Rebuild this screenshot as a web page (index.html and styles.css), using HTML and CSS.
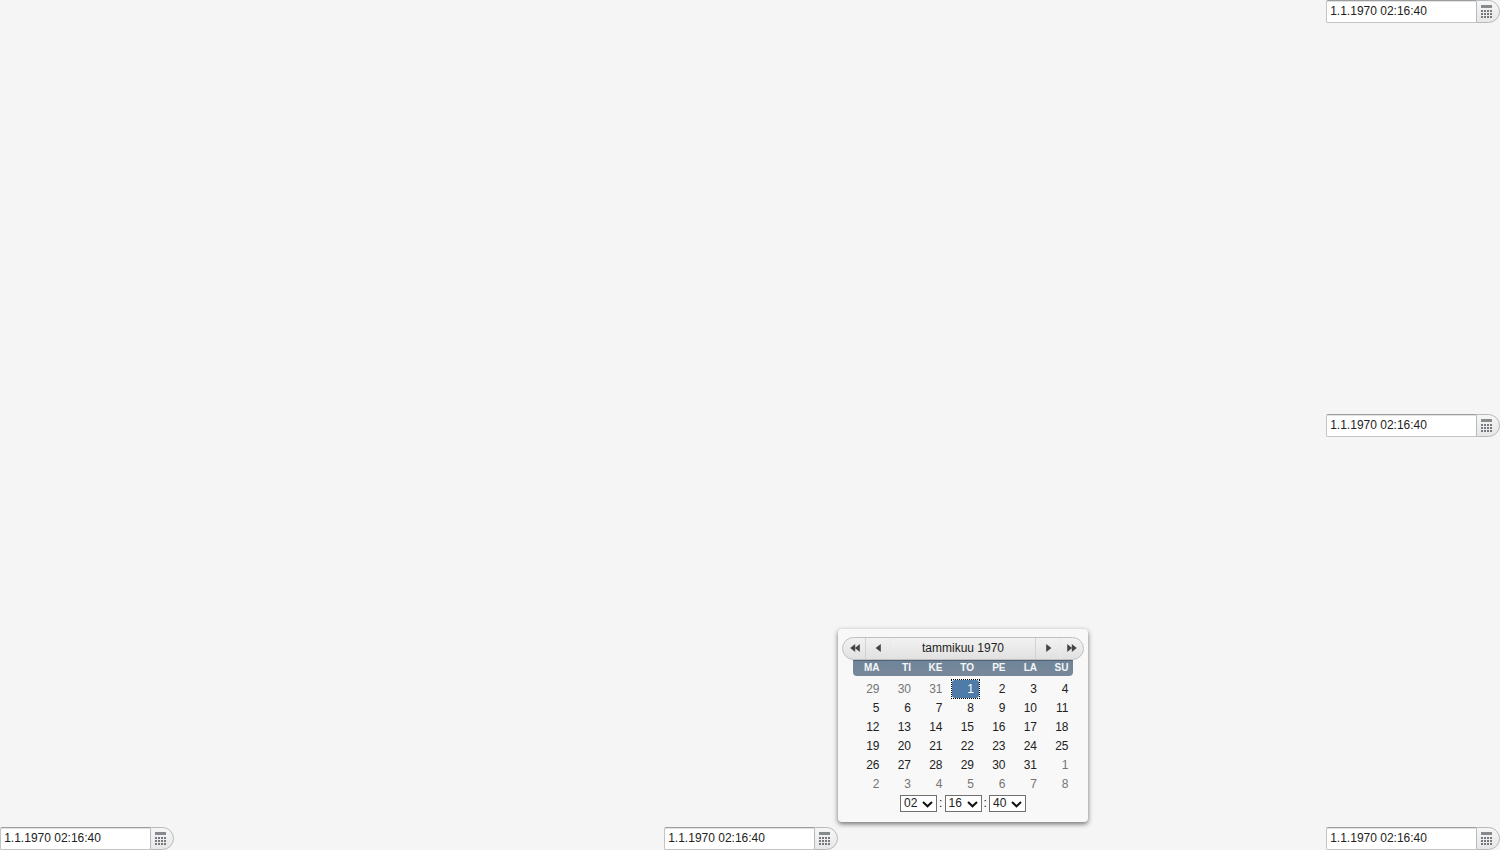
FILE: index.html
```html
<!DOCTYPE html>
<html lang="fi">
<head>
<meta charset="utf-8">
<title>Date fields</title>
<link rel="stylesheet" href="styles.css">
</head>
<body>
<svg class="defs" width="0" height="0">
  <symbol id="cal" viewBox="0 0 11 13">
    <path fill="#858a8f" d="M0 0h11v3H0z"/>
    <path fill="#75797d" d="M0 5h2v2H0zM3 5h2v2H3zM6 5h2v2H6zM9 5h2v2H9zM0 8h2v2H0zM3 8h2v2H3zM6 8h2v2H6zM9 8h2v2H9zM0 11h2v2H0zM3 11h2v2H3zM6 11h2v2H6zM9 11h2v2H9z"/>
  </symbol>
  <symbol id="one" viewBox="0 0 10 8"><path d="M7.8 0v8L2.6 4z"/></symbol>
  <symbol id="two" viewBox="0 0 10 8"><path d="M5.2 0v8L.2 4zM9.8 0v8L5 4z"/></symbol>
  <symbol id="chev" viewBox="0 0 11 7"><path fill="none" stroke="#111" stroke-width="2" d="M1 1l4.5 4.3L10 1"/></symbol>
</svg>
<main class="page">
  <div class="row end">
    <div class="field"><div class="input">1.1.1970 02:16:40</div><div class="button"><svg><use href="#cal"/></svg></div></div>
  </div>
  <div class="row end">
    <div class="field"><div class="input">1.1.1970 02:16:40</div><div class="button"><svg><use href="#cal"/></svg></div></div>
  </div>
  <div class="row bottom">
    <div class="field"><div class="input">1.1.1970 02:16:40</div><div class="button"><svg><use href="#cal"/></svg></div></div>
    <div class="field"><div class="input">1.1.1970 02:16:40</div><div class="button"><svg><use href="#cal"/></svg></div></div>
    <div class="field"><div class="input">1.1.1970 02:16:40</div><div class="button"><svg><use href="#cal"/></svg></div></div>
  </div>
</main>
<section class="popup">
  <div class="nav">
    <span class="step"><svg><use href="#two"/></svg></span>
    <span class="step"><svg><use href="#one"/></svg></span>
    <span class="month">tammikuu 1970</span>
    <span class="step flip"><svg><use href="#one"/></svg></span>
    <span class="step flip last"><svg><use href="#two"/></svg></span>
  </div>
  <div class="week"><span>MA</span><span>TI</span><span>KE</span><span>TO</span><span>PE</span><span>LA</span><span>SU</span></div>
  <div class="days">
    <span class="off">29</span><span class="off">30</span><span class="off">31</span><span class="selected">1</span><span>2</span><span>3</span><span>4</span>
    <span>5</span><span>6</span><span>7</span><span>8</span><span>9</span><span>10</span><span>11</span>
    <span>12</span><span>13</span><span>14</span><span>15</span><span>16</span><span>17</span><span>18</span>
    <span>19</span><span>20</span><span>21</span><span>22</span><span>23</span><span>24</span><span>25</span>
    <span>26</span><span>27</span><span>28</span><span>29</span><span>30</span><span>31</span><span class="off">1</span>
    <span class="off">2</span><span class="off">3</span><span class="off">4</span><span class="off">5</span><span class="off">6</span><span class="off">7</span><span class="off">8</span>
  </div>
  <div class="time">
    <span class="select">02<svg><use href="#chev"/></svg></span><span class="colon">:</span><span class="select">16<svg><use href="#chev"/></svg></span><span class="colon">:</span><span class="select">40<svg><use href="#chev"/></svg></span>
  </div>
</section>
</body>
</html>
```
FILE: styles.css
```css
* { box-sizing: border-box; }
body {
  margin: 0;
  background: #f5f5f5;
  color: #222;
  font: 12px/18px "Liberation Sans", Arial, sans-serif;
  overflow: hidden;
}
.defs { position: absolute; }
.page { height: 850px; display: flex; flex-direction: column; justify-content: space-between; }
.row { display: flex; }
.end { justify-content: flex-end; }
.bottom { display: grid; grid-template-columns: 664px 662px 174px; }
.field { display: flex; width: 174px; height: 23px; }
.input {
  width: 150px;
  padding: 1px 3.2px;
  background: #fff;
  border: 1px solid #c4c4c4;
  border-top-color: #9c9d9d;
  border-right: 0;
  border-radius: 2px 0 0 2px;
  box-shadow: inset 0 1px 0 #e2e2e2;
}
.button {
  width: 24px;
  padding: 4px 0 0 4px;
  border: 1px solid #b8b9ba;
  border-radius: 0 12px 12px 0;
  background: linear-gradient(#f6f6f6, #e7e7e7);
}
.button svg { display: block; width: 11px; height: 13px; }
.popup {
  position: absolute;
  left: 838px;
  top: 629px;
  width: 250px;
  height: 193px;
  padding: 8px 4px 0;
  background: #f8f8f8;
  border-radius: 4px;
  box-shadow: 0 2px 5px rgba(0, 0, 0, .55);
}
.nav {
  display: flex;
  width: 242px;
  height: 23px;
  border: 1px solid #bfc0c1;
  border-radius: 12px;
  background: linear-gradient(#f2f2f2, #e1e1e1);
}
.step {
  width: 23px;
  display: flex;
  align-items: center;
  justify-content: center;
  border-right: 1px solid #d2d2d2;
}
.step svg { width: 10px; height: 8px; margin-bottom: 1px; fill: #454545; }
.step:first-child svg { margin-left: 1px; }
.step + .step { width: 25px; border-right-color: #e9e9e9; }
.step.flip { width: 25px; border-right: 0; border-left: 1px solid #d2d2d2; padding-left: 1px; }
.step.flip.last { width: 23px; border-left-color: #e9e9e9; padding-right: 2px; }
.flip svg { transform: scaleX(-1); }
.month { flex: 1; text-align: center; line-height: 20px; }
.week {
  display: grid;
  grid-template-columns: repeat(7, 31.5px);
  width: 220px;
  height: 16px;
  margin-left: 11px;
  border-top: 1px solid #536373;
  border-radius: 0 0 4px 4px;
  background: linear-gradient(#70859a, #778899);
  color: #f4f6f8;
  font-weight: bold;
  font-size: 10px;
  line-height: 14px;
}
.week span { text-align: right; padding-right: 5px; }
.days {
  display: grid;
  grid-template-columns: repeat(7, 31.5px);
  grid-auto-rows: 19px;
  width: 220px;
  margin: 3px 0 0 11px;
  line-height: 20px;
}
.days span { text-align: right; padding-right: 5px; }
.days .off { color: #757575; }
.days .selected {
  position: relative;
  width: 27px;
  height: 18px;
  margin: 1px 0 0 4.5px;
  border-radius: 3px;
  background: #4e7ba7;
  color: #fff;
  line-height: 18px;
}
.selected::after {
  content: "";
  position: absolute;
  inset: -1px;
  border: 1px dotted #000;
}
.time { display: flex; justify-content: center; padding-top: 2px; }
.select {
  display: flex;
  align-items: center;
  justify-content: space-between;
  width: 37px;
  height: 17px;
  padding: 0 3px;
  border: 1px solid #707070;
  background: #fff;
  line-height: 15px;
}
.select svg { width: 11px; height: 7px; margin-top: 1px; }
.colon { width: 7.5px; text-align: center; line-height: 17px; }
```
